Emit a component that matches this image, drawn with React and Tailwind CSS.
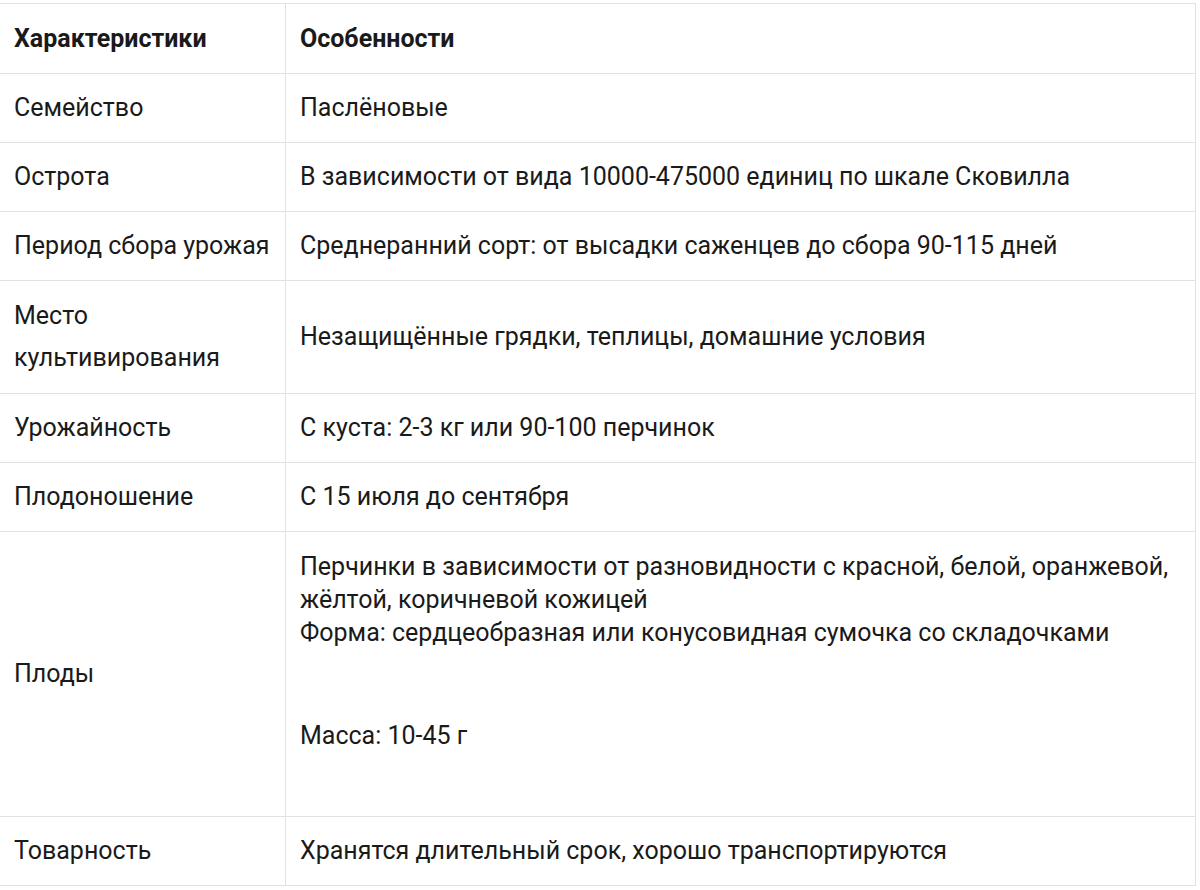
import React from "react";

const rows = [
  ["Семейство", "Паслёновые"],
  ["Острота", "В зависимости от вида 10000-475000 единиц по шкале Сковилла"],
  ["Период сбора урожая", "Среднеранний сорт: от высадки саженцев до сбора 90-115 дней"],
];

const rows2 = [
  ["Урожайность", "С куста: 2-3 кг или 90-100 перчинок"],
  ["Плодоношение", "С 15 июля до сентября"],
];

const td = "border border-[#dfe3e8] px-[14px] py-[18px] align-middle leading-[32px]";

export default function App() {
  return (
    <div className="bg-white w-[1200px] h-[890px] overflow-hidden pt-[3px] text-[25px] text-[#1a1a1a]" style={{ fontFamily: "Roboto, 'Noto Sans', sans-serif" }}>
      <table className="border-collapse w-[1197px] -ml-px table-fixed">
        <colgroup>
          <col className="w-[286px]" />
          <col />
        </colgroup>
        <tbody>
          <tr>
            <td className={td + " font-bold pt-[19px] whitespace-nowrap"}>Характеристики</td>
            <td className={td + " font-bold pt-[19px] whitespace-nowrap"}>Особенности</td>
          </tr>
          {rows.map(([a, b]) => (
            <tr key={a}>
              <td className={td + " whitespace-nowrap"}>{a}</td>
              <td className={td + " whitespace-nowrap"}>{b}</td>
            </tr>
          ))}
          <tr>
            <td className="border border-[#dfe3e8] px-[14px] py-[14px] align-middle leading-[42px] whitespace-nowrap">
              Место
              <br />
              культивирования
            </td>
            <td className={td + " whitespace-nowrap"}>Незащищённые грядки, теплицы, домашние условия</td>
          </tr>
          {rows2.map(([a, b]) => (
            <tr key={a}>
              <td className={td + " whitespace-nowrap"}>{a}</td>
              <td className={td + " whitespace-nowrap"}>{b}</td>
            </tr>
          ))}
          <tr>
            <td className={td}>Плоды</td>
            <td className={td + " whitespace-nowrap leading-[33px]"}>
              <p>
                Перчинки в зависимости от разновидности с красной, белой, оранжевой,
                <br />
                жёлтой, коричневой кожицей
                <br />
                Форма: сердцеобразная или конусовидная сумочка со складочками
              </p>
              <p className="mt-[70px] mb-[46px]">Масса: 10-45 г</p>
            </td>
          </tr>
          <tr>
            <td className={td + " whitespace-nowrap"}>Товарность</td>
            <td className={td + " whitespace-nowrap"}>Хранятся длительный срок, хорошо транспортируются</td>
          </tr>
        </tbody>
      </table>
    </div>
  );
}
